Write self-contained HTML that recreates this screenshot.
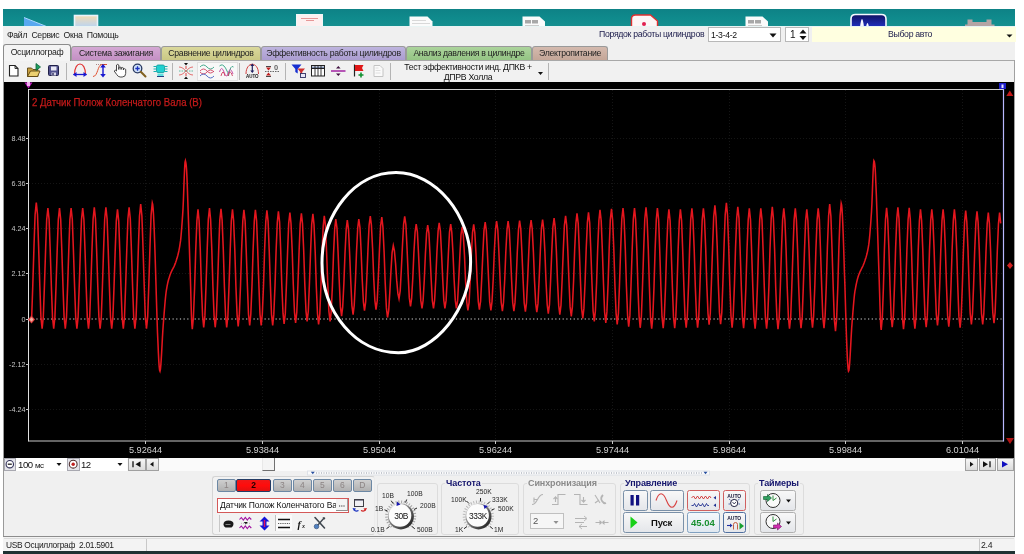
<!DOCTYPE html>
<html lang="ru">
<head>
<meta charset="utf-8">
<title>USB Осциллограф</title>
<style>
html,body{margin:0;padding:0;}
body{width:1024px;height:554px;position:relative;overflow:hidden;background:#ffffff;font-family:"Liberation Sans",sans-serif;font-size:11px;color:#1a1a1a;}
.a{position:absolute;}
.t{position:absolute;white-space:nowrap;line-height:1;will-change:transform;}
#desk{left:3px;top:9px;width:1012px;height:18px;background:#10888a;}
#win{left:3px;top:27px;width:1012px;height:524px;background:#f0f0f0;}
#dark{left:3px;top:551px;width:1012px;height:3px;background:#1f3232;}
.tab{will-change:transform;position:absolute;top:46px;height:14px;border:1px solid #9a9a9a;border-bottom:none;border-radius:3px 3px 0 0;box-sizing:border-box;text-align:center;font-size:8.700px;letter-spacing:-0.300px;line-height:13px;white-space:nowrap;color:#222;}
.u{font-size:8.700px;letter-spacing:-0.300px;}
.sep{position:absolute;width:1px;background:#b4b4b4;top:63px;height:17px;}
svg{position:absolute;overflow:visible;}
.btn{position:absolute;box-sizing:border-box;border:1px solid #7f8fa0;border-radius:2px;background:linear-gradient(#f6f6f6,#dcdcdc);}
.grp{position:absolute;box-sizing:border-box;border:1px solid #dcdcdc;border-radius:3px;}
.kl{will-change:transform;position:absolute;white-space:nowrap;line-height:1;font-size:6.700px;color:#262626;}
</style>
</head>
<body>
<div id="desk" class="a"></div>
<svg class="a" style="left:0;top:0;" width="1024" height="27" viewBox="0 0 1024 27">
  <defs>
    <linearGradient id="gteal" x1="0" y1="0" x2="0" y2="1"><stop offset="0" stop-color="#0e8286"/><stop offset="0.5" stop-color="#0f8a8c"/><stop offset="1" stop-color="#169090"/></linearGradient>
    <linearGradient id="gimg" x1="0" y1="0" x2="0" y2="1"><stop offset="0" stop-color="#f4dcb4"/><stop offset="1" stop-color="#b8d4f4"/></linearGradient>
    <linearGradient id="gnavy" x1="0" y1="0" x2="0" y2="1"><stop offset="0" stop-color="#101060"/><stop offset="1" stop-color="#2030c0"/></linearGradient>
  </defs>
  <rect x="3" y="9" width="1012" height="17.500" fill="url(#gteal)"/>
  <path d="M24 17.500L46.500 26.500H24z" fill="#58a8f0"/>
  <path d="M24 17.500L46.500 26.500" stroke="#a8d8ff" stroke-width="1" fill="none"/>
  <rect x="74.500" y="15.500" width="23" height="12" fill="url(#gimg)" stroke="#e8f4fc" stroke-width="1.600"/>
  <rect x="296.500" y="14.500" width="26" height="13" fill="#fdf0f0" stroke="#f0f8f8" stroke-width="1"/>
  <path d="M301 18.500h17M306 20.500h8" stroke="#e08080" stroke-width="0.800"/>
  <path d="M409.500 27V16.500h18l5 5V27z" fill="#fbfbfb"/>
  <path d="M412 20.500h14M412 23.500h18" stroke="#d0d0d0" stroke-width="0.800"/>
  <path d="M522.500 27V16.500h17l5.500 5V27z" fill="#fbfbfb"/>
  <path d="M525 20h6v3.500h-6zM532 20h6v3.500h-6z" fill="#a8a8a8"/>
  <path d="M525 25.500h14" stroke="#c0c0c0" stroke-width="0.800"/>
  <path d="M631.500 27V19q0-4 4-4h15l7 6V27z" fill="#fdf6f6" stroke="#e03030" stroke-width="1.400"/>
  <circle cx="644" cy="24" r="2" fill="#e02050"/>
  <path d="M745.500 27V16.500h17l5.500 5V27z" fill="#fbfbfb"/>
  <path d="M748 20h6v3.500h-6zM755 20h6v3.500h-6z" fill="#a8a8a8"/>
  <path d="M748 25.500h14" stroke="#c0c0c0" stroke-width="0.800"/>
  <path d="M851 27V19q0-4.500 4.500-4.500h26q4.500 0 4.500 4.500V27z" fill="url(#gnavy)" stroke="#f4f8ff" stroke-width="1.600"/>
  <path d="M860 27q1-8 2-8t2 8zM866 27q0.800-4 1.500-4t1.500 4z" fill="#f8f8ff"/>
  <path d="M965 27v-2.500h2.500V19.500h5V22h14V19.500h5V24.500h3V27z" fill="#b4a4a4"/>
</svg>

<div id="win" class="a"></div>
<div id="dark" class="a"></div>
<div class="a" style="left:3px;top:26px;width:1012px;height:1px;background:#e8f4f4;"></div>
<div class="t" id="menu" style="left:7px;top:31.400px;font-size:8.700px;letter-spacing:-0.300px;color:#222;word-spacing:0px;">Файл&nbsp; Сервис&nbsp; Окна&nbsp; Помощь</div>
<div class="t" id="order" style="left:599px;top:30.400px;font-size:8.700px;letter-spacing:-0.300px;color:#1a1a4a;">Порядок работы цилиндров</div>
<div class="a" style="left:708px;top:27px;width:73px;height:15px;background:#fff;border:1px solid #b8b8b8;box-sizing:border-box;"></div>
<div class="t" style="left:711px;top:30.800px;font-size:8.700px;letter-spacing:-0.300px;color:#111;">1-3-4-2</div>
<svg style="left:769px;top:33px;" width="8" height="5"><path d="M0.500 0.500h7l-3.500 4z" fill="#111"/></svg>
<div class="a" style="left:785px;top:27px;width:24px;height:15px;background:#fff;border:1px solid #b8b8b8;box-sizing:border-box;"></div>
<div class="t" style="left:790px;top:30.400px;font-size:10px;color:#111;">1</div>
<svg style="left:799px;top:29px;" width="8" height="12"><path d="M0.500 4.500h7l-3.500-4zM0.500 7h7l-3.500 4z" fill="#111"/></svg>
<div class="a" style="left:811.500px;top:27px;width:204px;height:15px;background:#ffffe0;"></div>
<div class="t" id="vybor" style="left:888px;top:30.400px;font-size:8.700px;letter-spacing:-0.300px;color:#1a1a4a;">Выбор авто</div>
<svg style="left:1006px;top:34px;" width="7" height="4"><path d="M0.500 0.500h6l-3 3z" fill="#111"/></svg>

<div class="a" style="left:3px;top:60px;width:1012px;height:1px;background:#a8a8a8;"></div>
<div class="tab" style="left:71px;width:90px;background:linear-gradient(#d4a8d4,#c490c4);">Система зажигания</div>
<div class="tab" style="left:161px;width:100px;background:linear-gradient(#dad89c,#cac884);">Сравнение цилиндров</div>
<div class="tab" style="left:261px;width:145px;background:linear-gradient(#beb4de,#aa9cd0);">Эффективность работы цилиндров</div>
<div class="tab" style="left:406px;width:126px;background:linear-gradient(#acd49c,#94c484);">Анализ давления в цилиндре</div>
<div class="tab" style="left:532px;width:76px;background:linear-gradient(#d4baae,#c4a698);">Электропитание</div>
<div class="tab" style="left:3px;top:44px;height:17px;width:68px;background:#f4f4f4;line-height:15px;border-color:#8c8c8c;">Осциллограф</div>

<div class="a" style="left:4px;top:61px;width:1010px;height:21px;background:#f1f1f1;"></div>
<div class="a" style="left:197px;top:62px;width:41px;height:19px;background:#f8f8f8;border:1px solid #e0e0e0;box-sizing:border-box;"></div>
<div class="sep" style="left:66px;"></div>
<div class="sep" style="left:172px;"></div>
<div class="sep" style="left:239px;"></div>
<div class="sep" style="left:285px;"></div>
<div class="sep" style="left:390px;"></div>
<div class="sep" style="left:548px;"></div>
<svg style="left:0;top:0;" width="560" height="84" viewBox="0 0 560 84">
  <!-- new -->
  <path d="M9.500 65.500h5.500l3 3v7.500h-8.500z" fill="#fff" stroke="#222" stroke-width="1.100"/>
  <path d="M15 65.500v3h3" fill="none" stroke="#222" stroke-width="0.900"/>
  <!-- open -->
  <path d="M27.500 76.500v-8.500h4l1.500 1.500h5v7z" fill="#c8a040" stroke="#5c4410" stroke-width="0.900"/>
  <path d="M27.500 76.500l3-5.500h9.500l-2.500 5.500z" fill="#ecd070" stroke="#5c4410" stroke-width="0.900"/>
  <path d="M36 63.500l4.500 3.500-4.500 3.500z" fill="#20a060" stroke="#0c6038" stroke-width="0.800"/>
  <!-- save -->
  <rect x="48.500" y="65.500" width="10" height="10" rx="1" fill="#50508c" stroke="#202048" stroke-width="1"/>
  <rect x="51" y="66.500" width="5.500" height="4" fill="#e8e8f4"/>
  <rect x="51.500" y="72.500" width="4.500" height="3" fill="#d8d8e8"/>
  <rect x="52.300" y="73" width="1.400" height="2.300" fill="#303060"/>
  <!-- arc with arrow -->
  <path d="M74.500 74.500c0-14 11-14 11 0" fill="none" stroke="#e03030" stroke-width="1.100"/>
  <path d="M73.500 74.500h13" stroke="#1818d0" stroke-width="1.300"/>
  <path d="M73 74.500l3.500-2.500v5zM87 74.500l-3.500-2.500v5z" fill="#1818d0"/>
  <!-- s-curve with arrow -->
  <path d="M93 76.500c5 0 4.500-12 9-12h5" fill="none" stroke="#e05030" stroke-width="1"/>
  <path d="M96 64.500h10" stroke="#804040" stroke-width="0.600" stroke-dasharray="1 1"/>
  <path d="M103 66v9" stroke="#1818d0" stroke-width="1.400"/>
  <path d="M103 64l-2.800 3.500h5.600zM103 77.500l-2.800-3.500h5.600z" fill="#1818d0"/>
  <!-- hand -->
  <path d="M116.500 70.500v-5.500q1.200-1.300 2.300 0v4.500v-2q1.200-1 2.300 0v2v-1.500q1.200-1 2.300 0v2v-1q1.300-0.800 2.300 0.400v4q0 3.600-3.500 3.600h-2q-2 0-3.500-2.500l-2.500-3.500q0.800-1.600 2.800 0z" fill="#fff" stroke="#333" stroke-width="0.900" stroke-linejoin="round"/>
  <!-- magnifier -->
  <circle cx="137.500" cy="68.500" r="4.300" fill="#cfe0f8" stroke="#283860" stroke-width="1.300"/>
  <path d="M135.300 68.500h4.400M137.500 66.300v4.400" stroke="#1830c0" stroke-width="1.300"/>
  <path d="M140.800 71.800l4.700 4.700" stroke="#806020" stroke-width="2" stroke-linecap="round"/>
  <!-- chip -->
  <rect x="156.500" y="65" width="8" height="7.500" rx="1.500" fill="#20d0d0" stroke="#109898" stroke-width="0.800"/>
  <path d="M153.500 66.500h3M153.500 69h3M153.500 71.500h3M164.500 66.500h3M164.500 69h3M164.500 71.500h3" stroke="#18b0b0" stroke-width="1"/>
  <path d="M157.500 73.500h6v3h-6z" fill="#60e0e0"/>
  <path d="M157 76.500h7" stroke="#204080" stroke-width="1"/>
  <!-- cross curves -->
  <path d="M179 67c6 0 8 8 14 8M179 75c6 0 8-8 14-8" fill="none" stroke="#e06060" stroke-width="0.900"/>
  <path d="M179 71h14" stroke="#40b090" stroke-width="0.800" stroke-dasharray="1.500 1"/>
  <path d="M186 65.500l-2-2.500h4zM186 76.500l-2 2.500h4z" fill="#111"/>
  <path d="M186 66v3M186 73v3" stroke="#e03030" stroke-width="0.900"/>
  <!-- multi waves -->
  <path d="M200 67q3.500-4 7 0t7 0" fill="none" stroke="#30a080" stroke-width="0.900"/>
  <path d="M200 71q3.500-4 7 0t7 0" fill="none" stroke="#d04060" stroke-width="0.900"/>
  <path d="M200 72q3.500 4 7 0t7 0" fill="none" stroke="#d04060" stroke-width="0.900"/>
  <path d="M200 76q3.500-4 7 0t7 0" fill="none" stroke="#4060c0" stroke-width="0.900"/>
  <!-- overlapped -->
  <path d="M219.500 66q3 -3 6 2t3 8q2-12 5-9" fill="none" stroke="#30a080" stroke-width="0.900"/>
  <path d="M219.500 72q2-7 4.500 0t4 2q2-9 5 0" fill="none" stroke="#c040a0" stroke-width="0.900"/>
  <path d="M221 76q2-8 4 0M228 76q2-8 4.500 0" fill="none" stroke="#d04060" stroke-width="0.900"/>
  <!-- auto -->
  <path d="M246 74c0-13 12.500-13 12.500 0" fill="none" stroke="#d04040" stroke-width="1"/>
  <path d="M252.300 65v7" stroke="#202060" stroke-width="1.200"/>
  <path d="M252.300 63.500l-2 2.500h4zM252.300 73l-2-2.500h4z" fill="#202060"/>
  <text x="252.300" y="77.500" font-size="4.500" font-weight="bold" text-anchor="middle" fill="#111" font-family="Liberation Sans, sans-serif">AUTO</text>
  <!-- +-0 -->
  <path d="M265 71.500h14" stroke="#444" stroke-width="0.800" stroke-dasharray="1.500 1"/>
  <path d="M268.500 70.500l-2.500-3h5zM268.500 72.500l-2.500 3h5z" fill="#c02020"/>
  <path d="M266 66.500h5M266 76.500h5" stroke="#333" stroke-width="0.900"/>
  <text x="276" y="70" font-size="7.500" font-weight="bold" text-anchor="middle" fill="#666" font-family="Liberation Sans, sans-serif">0</text>
  <!-- filter -->
  <path d="M291.500 64.500h10l-3.800 4.500v4.500l-2.400-1.500v-3z" fill="#1830d0"/>
  <path d="M297.500 68.500h7.500l-2.800 3.500v4l-1.900-1.200v-2.800z" fill="#d03030"/>
  <rect x="300.500" y="73.500" width="5" height="4" fill="#e8e8f8" stroke="#303060" stroke-width="0.900"/>
  <!-- table -->
  <rect x="311.500" y="65.500" width="13" height="10.500" fill="#fff" stroke="#222" stroke-width="1"/>
  <path d="M311.500 68.500h13" stroke="#222" stroke-width="1"/>
  <path d="M312 66.500h12v1.500h-12z" fill="#8090b0"/>
  <path d="M315 65.500v10.500M318 65.500v10.500M321 65.500v10.500" stroke="#222" stroke-width="0.900"/>
  <!-- divider -->
  <path d="M331 71h14.500" stroke="#a020a0" stroke-width="1.500"/>
  <path d="M338.300 66l-2.300 2.500h4.600zM338.300 76l-2.300-2.500h4.600z" fill="#401040"/>
  <!-- flag -->
  <path d="M354.500 64.500v12" stroke="#222" stroke-width="1.200"/>
  <path d="M355 65h8.500l-1.500 3 1.500 3h-8.500z" fill="#e01818"/>
  <path d="M358.500 75h5M361 72.500v5" stroke="#109030" stroke-width="1.600"/>
  <!-- doc disabled -->
  <path d="M374 65.500h6l3 3v8h-9z" fill="#fafafa" stroke="#c4c4c4" stroke-width="1"/>
  <path d="M375.500 68h3M375.500 70.500h5M375.500 73h5" stroke="#d8d8d8" stroke-width="0.800"/>
  <!-- dropdown arrow -->
  <path d="M538 72h5l-2.500 3z" fill="#111"/>
</svg>
<div class="t u" id="test1" style="left:398px;width:140px;text-align:center;top:62.500px;color:#111;">Тест эффективности инд. ДПКВ +</div>
<div class="t u" id="test2" style="left:398px;width:140px;text-align:center;top:72.500px;color:#111;">ДПРВ Холла</div>

<div class="a" style="left:4px;top:82px;width:1011px;height:376px;background:#000;"></div>
<svg class="a" style="left:0;top:0;" width="1024" height="554" viewBox="0 0 1024 554">
  <g stroke="#151515" stroke-width="1" stroke-dasharray="1 2" fill="none">
    <path d="M29 138.5H1003M29 183.5H1003M29 228.5H1003M29 273.5H1003M29 364.5H1003M29 409.5H1003"/>
    <path d="M145.5 90V441M262.5 90V441M379.5 90V441M495.5 90V441M612.5 90V441M729.5 90V441M845.5 90V441M962.5 90V441"/>
  </g>
  <path d="M29 319H1001.500" stroke="#d8d8d8" stroke-width="1.100" stroke-dasharray="1.200 2.480" fill="none"/>
  <path d="M31.7 316.6 L32.8 285.0 L34.0 246.1 L35.1 214.5 L36.3 202.5 L37.5 214.5 L38.6 246.1 L39.8 285.0 L40.9 316.6 L42.1 328.6 L43.3 317.1 L44.4 286.9 L45.6 249.7 L46.7 219.5 L47.9 208.0 L49.1 219.5 L50.2 249.7 L51.4 286.9 L52.5 317.1 L53.7 328.6 L54.9 317.1 L56.0 286.9 L57.2 249.7 L58.3 219.5 L59.5 208.0 L60.7 219.5 L61.8 249.7 L63.0 286.9 L64.1 317.1 L65.3 328.6 L66.5 317.1 L67.6 286.9 L68.8 249.7 L69.9 219.5 L71.1 208.0 L72.3 219.5 L73.4 249.7 L74.6 286.9 L75.7 317.1 L76.9 328.6 L78.1 317.1 L79.2 286.9 L80.4 249.7 L81.5 219.5 L82.7 208.0 L83.9 219.5 L85.0 249.7 L86.2 286.9 L87.3 317.1 L88.5 328.6 L89.7 317.0 L90.8 286.7 L92.0 249.3 L93.1 219.0 L94.3 207.4 L95.5 219.0 L96.6 249.3 L97.8 286.7 L98.9 317.0 L100.1 328.6 L101.3 317.0 L102.4 286.7 L103.6 249.3 L104.7 219.0 L105.9 207.4 L107.1 219.0 L108.2 249.3 L109.4 286.7 L110.5 317.0 L111.7 328.6 L112.9 317.2 L114.0 287.4 L115.2 250.6 L116.3 220.8 L117.5 209.4 L118.7 220.8 L119.8 250.6 L121.0 287.4 L122.1 317.2 L123.3 328.6 L124.5 317.0 L125.6 286.7 L126.8 249.3 L127.9 219.0 L129.1 207.4 L130.3 219.0 L131.4 249.3 L132.6 286.7 L133.7 317.0 L134.9 328.6 L136.1 316.7 L137.2 285.6 L138.4 247.1 L139.5 216.0 L140.7 204.1 L141.9 216.0 L143.0 247.1 L144.2 285.6 L145.3 316.7 L146.5 328.6 L147.7 316.6 L148.8 285.2 L150.0 246.3 L151.1 214.9 L152.3 202.9 L152.7 204.3 L153.1 208.2 L153.5 214.4 L153.9 222.5 L154.3 232.2 L154.7 243.3 L155.1 255.4 L155.5 268.2 L155.9 281.5 L156.3 294.9 L156.7 308.1 L157.1 320.8 L157.5 332.8 L158.0 343.7 L158.4 353.1 L158.8 360.9 L159.2 366.7 L159.6 370.2 L160.0 371.2 L160.4 369.4 L160.8 365.5 L161.2 359.9 L161.6 353.1 L162.0 345.7 L162.4 338.3 L162.8 331.3 L163.2 325.3 L163.6 320.3 L164.0 315.2 L164.4 310.1 L164.8 305.2 L165.2 300.6 L165.6 296.5 L166.0 293.0 L166.4 290.2 L166.8 287.8 L167.2 285.6 L167.6 283.6 L168.0 281.8 L168.4 280.2 L168.8 278.7 L169.3 277.3 L169.7 276.0 L170.1 274.8 L170.5 273.8 L170.9 272.8 L171.3 271.9 L171.7 271.0 L172.1 270.2 L172.5 269.4 L172.9 268.7 L173.3 267.9 L173.7 267.1 L174.1 266.3 L174.5 265.4 L174.9 264.4 L175.3 263.4 L175.7 262.3 L176.1 261.1 L176.5 259.8 L176.9 258.6 L177.3 257.2 L177.7 255.8 L178.1 254.2 L178.5 252.5 L178.9 250.7 L179.3 248.6 L179.7 246.3 L180.1 243.7 L180.6 240.4 L181.0 236.3 L181.4 231.7 L181.8 226.7 L182.2 221.2 L182.6 215.4 L183.0 209.0 L183.4 200.0 L183.8 189.1 L184.2 178.1 L184.6 168.6 L185.0 162.3 L185.4 160.7 L185.8 162.3 L186.2 165.2 L186.6 169.9 L187.0 178.4 L187.4 189.3 L187.8 201.2 L188.2 212.6 L188.6 223.9 L189.0 235.9 L189.4 248.3 L189.8 260.7 L190.2 272.7 L190.6 285.7 L191.0 300.5 L191.4 314.6 L191.9 325.1 L192.3 329.2 L193.4 317.8 L194.6 287.8 L195.7 250.8 L196.9 220.8 L198.0 209.4 L199.1 220.7 L200.3 250.1 L201.4 286.6 L202.6 316.0 L203.7 327.3 L204.9 315.9 L206.0 286.1 L207.2 249.2 L208.3 219.4 L209.5 208.0 L210.6 219.4 L211.8 249.2 L212.9 286.1 L214.1 315.9 L215.2 327.3 L216.4 316.0 L217.5 286.4 L218.7 249.7 L219.8 220.1 L221.0 208.8 L222.1 220.1 L223.3 249.7 L224.4 286.4 L225.6 316.0 L226.7 327.3 L227.9 316.0 L229.0 286.6 L230.2 250.1 L231.3 220.7 L232.5 209.4 L233.6 220.6 L234.8 249.8 L235.9 285.9 L237.1 315.1 L238.2 326.3 L239.3 315.2 L240.5 286.1 L241.6 250.1 L242.8 221.0 L243.9 209.9 L245.1 220.9 L246.2 249.8 L247.4 285.4 L248.5 314.3 L249.7 325.3 L250.8 314.3 L252.0 285.4 L253.1 249.8 L254.3 220.9 L255.4 209.9 L256.6 220.9 L257.7 249.8 L258.9 285.4 L260.0 314.3 L261.2 325.3 L262.3 314.3 L263.5 285.6 L264.6 250.0 L265.8 221.3 L266.9 210.3 L268.1 221.3 L269.2 250.0 L270.4 285.6 L271.5 314.3 L272.7 325.3 L273.8 314.4 L275.0 285.9 L276.1 250.7 L277.3 222.2 L278.4 211.3 L279.6 222.1 L280.7 250.2 L281.8 285.1 L283.0 313.2 L284.1 324.0 L285.3 313.4 L286.4 285.5 L287.6 251.2 L288.7 223.3 L289.9 212.7 L291.0 223.2 L292.2 250.7 L293.3 284.8 L294.5 312.3 L295.6 322.8 L296.8 312.3 L297.9 285.0 L299.1 251.1 L300.2 223.8 L301.4 213.3 L302.5 223.6 L303.7 250.6 L304.8 284.1 L306.0 311.1 L307.1 321.4 L308.3 311.1 L309.4 284.2 L310.6 251.0 L311.7 224.1 L312.9 213.8 L314.0 224.4 L315.2 252.0 L316.3 286.2 L317.5 313.8 L318.6 324.4 L319.8 314.0 L320.9 286.9 L322.0 253.3 L323.2 226.2 L324.3 215.8 L325.5 225.9 L326.6 252.3 L327.8 284.9 L328.9 311.3 L330.1 321.4 L331.2 311.6 L332.4 286.1 L333.5 254.4 L334.7 228.9 L335.8 219.1 L337.0 228.4 L338.1 252.6 L339.3 282.7 L340.4 306.9 L341.6 316.2 L342.7 307.0 L343.9 283.0 L345.0 253.3 L346.2 229.3 L347.3 220.1 L348.5 229.1 L349.6 252.7 L350.8 282.0 L351.9 305.6 L353.1 314.6 L354.2 305.5 L355.4 281.6 L356.5 252.1 L357.7 228.2 L358.8 219.1 L360.0 227.8 L361.1 250.7 L362.2 279.1 L363.4 302.0 L364.5 310.7 L365.7 301.7 L366.8 278.1 L368.0 248.8 L369.1 225.2 L370.3 216.2 L371.4 225.1 L372.6 248.5 L373.7 277.4 L374.9 300.8 L376.0 309.7 L377.2 300.9 L378.3 277.7 L379.5 249.2 L380.6 226.0 L381.8 217.2 L382.9 226.8 L384.1 251.9 L385.2 282.8 L386.4 307.9 L387.5 317.5 L388.7 310.6 L389.8 292.7 L391.0 270.4 L392.1 252.5 L393.3 245.6 L394.4 250.7 L395.6 263.9 L396.7 280.4 L397.9 293.6 L399.0 298.7 L400.2 290.8 L401.3 270.2 L402.5 244.8 L403.6 224.2 L404.7 216.3 L405.9 224.9 L407.0 247.5 L408.2 275.3 L409.3 297.9 L410.5 306.5 L411.6 298.6 L412.8 278.0 L413.9 252.6 L415.1 232.0 L416.2 224.1 L417.4 232.2 L418.5 253.3 L419.7 279.3 L420.8 300.4 L422.0 308.5 L423.1 300.5 L424.3 279.7 L425.4 253.9 L426.6 233.1 L427.7 225.1 L428.9 233.1 L430.0 253.9 L431.2 279.7 L432.3 300.5 L433.5 308.5 L434.6 300.3 L435.8 278.9 L436.9 252.4 L438.1 231.0 L439.2 222.8 L440.4 231.0 L441.5 252.4 L442.7 278.9 L443.8 300.3 L444.9 308.5 L446.1 300.4 L447.2 279.3 L448.4 253.3 L449.5 232.2 L450.7 224.1 L451.8 232.2 L453.0 253.3 L454.1 279.3 L455.3 300.4 L456.4 308.5 L457.6 300.7 L458.7 280.3 L459.9 255.0 L461.0 234.6 L462.2 226.8 L463.3 234.8 L464.5 255.7 L465.6 281.6 L466.8 302.5 L467.9 310.5 L469.1 302.3 L470.2 280.8 L471.4 254.1 L472.5 232.6 L473.7 224.4 L474.8 232.5 L476.0 253.9 L477.1 280.2 L478.3 301.6 L479.4 309.7 L480.6 301.3 L481.7 279.4 L482.9 252.3 L484.0 230.4 L485.2 222.0 L486.3 230.4 L487.4 252.5 L488.6 279.8 L489.7 301.9 L490.9 310.3 L492.0 301.8 L493.2 279.5 L494.3 251.9 L495.5 229.6 L496.6 221.1 L497.8 229.7 L498.9 252.2 L500.1 280.0 L501.2 302.5 L502.4 311.1 L503.5 302.5 L504.7 280.0 L505.8 252.2 L507.0 229.7 L508.1 221.1 L509.3 229.7 L510.4 252.2 L511.6 280.0 L512.7 302.5 L513.9 311.1 L515.0 302.4 L516.2 279.8 L517.3 251.8 L518.5 229.2 L519.6 220.5 L520.8 229.2 L521.9 252.0 L523.1 280.2 L524.2 303.0 L525.4 311.7 L526.5 303.0 L527.6 280.1 L528.8 251.7 L529.9 228.8 L531.1 220.1 L532.2 228.9 L533.4 251.9 L534.5 280.4 L535.7 303.4 L536.8 312.2 L538.0 303.4 L539.1 280.2 L540.3 251.7 L541.4 228.5 L542.6 219.7 L543.7 228.7 L544.9 252.1 L546.0 281.2 L547.2 304.6 L548.3 313.6 L549.5 304.5 L550.6 280.6 L551.8 251.1 L552.9 227.2 L554.1 218.1 L555.2 227.3 L556.4 251.4 L557.5 281.3 L558.7 305.4 L559.8 314.6 L561.0 305.2 L562.1 280.5 L563.3 249.9 L564.4 225.2 L565.6 215.8 L566.7 225.4 L567.8 250.6 L569.0 281.7 L570.1 306.9 L571.3 316.5 L572.4 306.6 L573.6 280.8 L574.7 249.0 L575.9 223.2 L577.0 213.3 L578.2 223.3 L579.3 249.6 L580.5 282.2 L581.6 308.5 L582.8 318.5 L583.9 308.4 L585.1 281.8 L586.2 249.0 L587.4 222.4 L588.5 212.3 L589.7 222.7 L590.8 250.0 L592.0 283.7 L593.1 311.0 L594.3 321.4 L595.4 310.8 L596.6 282.9 L597.7 248.4 L598.9 220.5 L600.0 209.9 L601.2 220.7 L602.3 248.9 L603.5 283.8 L604.6 312.0 L605.8 322.8 L606.9 311.9 L608.1 283.4 L609.2 248.2 L610.3 219.7 L611.5 208.8 L612.6 219.8 L613.8 248.7 L614.9 284.5 L616.1 313.4 L617.2 324.4 L618.4 313.3 L619.5 284.2 L620.7 248.2 L621.8 219.1 L623.0 208.0 L624.1 219.3 L625.3 249.0 L626.4 285.7 L627.6 315.4 L628.7 326.7 L629.9 315.4 L631.0 285.7 L632.2 249.0 L633.3 219.3 L634.5 208.0 L635.6 219.4 L636.8 249.4 L637.9 286.4 L639.1 316.4 L640.2 327.8 L641.4 316.3 L642.5 286.2 L643.7 249.0 L644.8 218.9 L646.0 207.4 L647.1 219.0 L648.3 249.3 L649.4 286.8 L650.5 317.1 L651.7 328.7 L652.8 317.2 L654.0 287.0 L655.1 249.7 L656.3 219.5 L657.4 208.0 L658.6 219.5 L659.7 249.5 L660.9 286.7 L662.0 316.7 L663.2 328.2 L664.3 316.9 L665.5 287.2 L666.6 250.4 L667.8 220.7 L668.9 209.4 L670.1 220.7 L671.2 250.4 L672.4 287.2 L673.5 316.9 L674.7 328.2 L675.8 316.9 L677.0 287.2 L678.1 250.4 L679.3 220.7 L680.4 209.4 L681.6 220.7 L682.7 250.3 L683.9 286.8 L685.0 316.4 L686.2 327.7 L687.3 316.3 L688.5 286.5 L689.6 249.6 L690.7 219.8 L691.9 208.4 L693.0 219.8 L694.2 249.6 L695.3 286.5 L696.5 316.3 L697.6 327.7 L698.8 316.3 L699.9 286.5 L701.1 249.6 L702.2 219.8 L703.4 208.4 L704.5 219.5 L705.7 248.6 L706.8 284.5 L708.0 313.6 L709.1 324.7 L710.3 313.3 L711.4 283.5 L712.6 246.6 L713.7 216.8 L714.9 205.4 L716.0 216.7 L717.2 246.4 L718.3 283.2 L719.5 312.9 L720.6 324.2 L721.8 312.6 L722.9 282.3 L724.1 244.8 L725.2 214.5 L726.4 202.9 L727.5 214.8 L728.7 246.0 L729.8 284.6 L731.0 315.8 L732.1 327.7 L733.2 316.2 L734.4 285.9 L735.5 248.6 L736.7 218.3 L737.8 206.8 L739.0 218.4 L740.1 248.7 L741.3 286.3 L742.4 316.6 L743.6 328.2 L744.7 316.8 L745.9 286.8 L747.0 249.8 L748.2 219.8 L749.3 208.4 L750.5 219.9 L751.6 250.0 L752.8 287.1 L753.9 317.2 L755.1 328.7 L756.2 317.2 L757.4 287.1 L758.5 250.0 L759.7 219.9 L760.8 208.4 L762.0 219.9 L763.1 250.0 L764.3 287.1 L765.4 317.2 L766.6 328.7 L767.7 317.1 L768.9 286.6 L770.0 248.9 L771.2 218.4 L772.3 206.8 L773.4 218.5 L774.6 249.1 L775.7 286.9 L776.9 317.5 L778.0 329.2 L779.2 317.7 L780.3 287.5 L781.5 250.1 L782.6 219.9 L783.8 208.4 L784.9 219.9 L786.1 250.0 L787.2 287.1 L788.4 317.2 L789.5 328.7 L790.7 317.2 L791.8 287.1 L793.0 250.0 L794.1 219.9 L795.3 208.4 L796.4 219.8 L797.6 249.8 L798.7 286.8 L799.9 316.8 L801.0 328.2 L802.2 316.9 L803.3 287.2 L804.5 250.4 L805.6 220.7 L806.8 209.4 L807.9 220.7 L809.1 250.3 L810.2 286.8 L811.4 316.4 L812.5 327.7 L813.6 316.3 L814.8 286.5 L815.9 249.6 L817.1 219.8 L818.2 208.4 L819.4 219.8 L820.5 249.8 L821.7 286.8 L822.8 316.8 L824.0 328.2 L825.1 316.3 L826.3 285.3 L827.4 247.0 L828.6 216.0 L829.7 204.1 L830.9 216.2 L832.0 248.0 L833.2 287.3 L834.3 319.1 L835.5 331.2 L836.6 319.0 L837.8 287.1 L838.9 247.6 L840.1 215.7 L841.2 203.5 L841.6 205.0 L842.0 209.1 L842.4 215.6 L842.8 224.1 L843.2 234.3 L843.6 245.8 L844.0 258.4 L844.4 271.7 L844.9 285.4 L845.3 299.1 L845.7 312.6 L846.1 325.4 L846.5 337.3 L846.9 347.9 L847.3 356.9 L847.7 364.0 L848.1 368.8 L848.5 371.1 L848.9 370.5 L849.3 367.5 L849.7 362.6 L850.1 356.3 L850.5 349.1 L850.9 341.6 L851.3 334.4 L851.7 327.8 L852.1 322.5 L852.5 317.4 L852.9 312.3 L853.3 307.3 L853.7 302.6 L854.1 298.2 L854.5 294.4 L854.9 291.3 L855.4 288.8 L855.8 286.5 L856.2 284.5 L856.6 282.6 L857.0 280.9 L857.4 279.3 L857.8 277.9 L858.2 276.6 L858.6 275.3 L859.0 274.2 L859.4 273.2 L859.8 272.3 L860.2 271.4 L860.6 270.6 L861.0 269.8 L861.4 269.0 L861.8 268.2 L862.2 267.4 L862.6 266.6 L863.0 265.8 L863.4 264.8 L863.8 263.8 L864.2 262.8 L864.6 261.6 L865.0 260.4 L865.4 259.1 L865.9 257.8 L866.3 256.4 L866.7 254.9 L867.1 253.3 L867.5 251.5 L867.9 249.5 L868.3 247.3 L868.7 244.9 L869.1 241.9 L869.5 238.1 L869.9 233.7 L870.3 228.8 L870.7 223.5 L871.1 217.8 L871.5 211.9 L871.9 204.0 L872.3 193.7 L872.7 182.5 L873.1 172.2 L873.5 164.4 L873.9 160.7 L874.3 161.4 L874.7 163.9 L875.1 167.5 L875.5 174.5 L875.9 184.6 L876.4 196.3 L876.8 208.1 L877.2 219.2 L877.6 231.2 L878.0 243.7 L878.4 256.2 L878.8 268.2 L879.2 279.7 L879.6 292.8 L880.0 306.2 L880.4 318.1 L880.8 326.6 L881.2 329.9 L882.3 318.3 L883.4 287.8 L884.4 250.0 L885.5 219.5 L886.6 207.9 L887.7 219.3 L888.9 249.1 L890.0 285.9 L891.1 315.7 L892.2 327.1 L893.4 315.7 L894.5 285.7 L895.6 248.6 L896.8 218.6 L897.9 207.2 L899.0 218.8 L900.2 249.3 L901.3 287.0 L902.4 317.5 L903.5 329.1 L904.7 317.5 L905.8 287.2 L906.9 249.8 L908.1 219.5 L909.2 207.9 L910.3 219.4 L911.5 249.6 L912.6 287.0 L913.7 317.2 L914.9 328.7 L916.0 317.3 L917.1 287.4 L918.2 250.6 L919.4 220.7 L920.5 209.3 L921.6 220.5 L922.8 250.0 L923.9 286.4 L925.0 315.9 L926.2 327.1 L927.3 315.9 L928.4 286.4 L929.5 250.0 L930.7 220.5 L931.8 209.3 L932.9 220.4 L934.1 249.4 L935.2 285.3 L936.3 314.3 L937.5 325.4 L938.6 314.3 L939.7 285.3 L940.8 249.4 L942.0 220.4 L943.1 209.3 L944.2 220.5 L945.4 249.8 L946.5 286.1 L947.6 315.4 L948.8 326.6 L949.9 315.4 L951.0 286.1 L952.1 249.8 L953.3 220.5 L954.4 209.3 L955.5 220.6 L956.7 250.2 L957.8 286.8 L958.9 316.4 L960.1 327.7 L961.2 316.5 L962.3 287.2 L963.4 251.1 L964.6 221.8 L965.7 210.6 L966.8 221.5 L968.0 249.9 L969.1 285.1 L970.2 313.5 L971.4 324.4 L972.5 313.6 L973.6 285.3 L974.7 250.4 L975.9 222.1 L977.0 211.3 L978.1 222.1 L979.3 250.4 L980.4 285.3 L981.5 313.6 L982.7 324.4 L983.8 313.7 L984.9 285.8 L986.0 251.3 L987.2 223.4 L988.3 212.7 L989.4 223.3 L990.6 250.9 L991.7 285.0 L992.8 312.6 L994.0 323.2 L995.1 312.6 L996.2 285.0 L997.3 250.9 L998.5 223.3 L999.6 212.7 L1000.7 223.3" fill="none" stroke="#e4161e" stroke-width="1.550" stroke-linejoin="miter" stroke-miterlimit="6"/>
  <path d="M322.0 263.0C322.0 213.0 355.1 172.5 396.0 172.5C435.5 172.5 470.6 214.6 470.6 262.0C470.6 308.3 435.2 352.8 398.3 352.8C356.2 352.8 322.0 312.6 322.0 263.0Z" fill="none" stroke="#ffffff" stroke-width="3"/>
  <path d="M28.5 89.5H1003.5" stroke="#d0d0d0" stroke-width="1" fill="none"/>
  <path d="M28.5 89V441.5" stroke="#e0e0e0" stroke-width="1" fill="none"/>
  <path d="M28.5 441H1003.5" stroke="#c8c8c8" stroke-width="1" fill="none"/>
  <path d="M1003.5 89V441.5" stroke="#b8b8ff" stroke-width="1.2" fill="none"/>
  <g stroke="#c8c8c8" stroke-width="1">
    <path d="M26 138.5h3M26 183.5h3M26 228.5h3M26 273.5h3M26 319.5h3M26 364.5h3M26 409.5h3"/>
    <path d="M145.5 441v3M262.5 441v3M379.5 441v3M495.5 441v3M612.5 441v3M729.5 441v3M845.5 441v3M962.5 441v3"/>
  </g>
  <!-- markers -->
  <path d="M24.5 82.5h8l-4 6z" fill="#c020c0"/>
  <rect x="27" y="82" width="3" height="4" fill="#f0b0f0"/>
  <rect x="999" y="83" width="7" height="6" fill="#1c1cc8"/>
  <rect x="1001.5" y="84.500" width="2" height="3.500" fill="#e0e0ff"/>
  <path d="M1006.300 96h7l-3.500-5.500z" fill="#c41818"/>
  <path d="M1006 438h8l-4 6z" fill="#b01414"/>
  <path d="M1007 265.500l3-3.500 3 3.500-3 3.500z" fill="#d02020"/>
  <path d="M28 319.500l3.500-4 3.500 4-3.500 4z" fill="#e04040"/>
  <path d="M29.500 319.500l2-2.200 2 2.200-2 2.200z" fill="#f0b0a0"/>
  <g font-family="Liberation Sans, sans-serif" font-size="7.200" fill="#c4c4c4" text-anchor="end">
    <text x="25.500" y="141">8.48</text>
    <text x="25.500" y="186">6.36</text>
    <text x="25.500" y="231">4.24</text>
    <text x="25.500" y="276">2.12</text>
    <text x="25.500" y="322">0</text>
    <text x="25.500" y="367">-2.12</text>
    <text x="25.500" y="412">-4.24</text>
  </g>
  <g font-family="Liberation Sans, sans-serif" font-size="9.200" fill="#d2d2d2" text-anchor="middle">
    <text x="145.500" y="453">5.92644</text>
    <text x="262.500" y="453">5.93844</text>
    <text x="379.500" y="453">5.95044</text>
    <text x="495.500" y="453">5.96244</text>
    <text x="612.500" y="453">5.97444</text>
    <text x="729.500" y="453">5.98644</text>
    <text x="845.500" y="453">5.99844</text>
    <text x="962.500" y="453">6.01044</text>
  </g>
  <text x="32" y="106" font-family="Liberation Sans, sans-serif" font-size="10.300" fill="#c41a1a" stroke="#c41a1a" stroke-width="0.250" textLength="170" lengthAdjust="spacingAndGlyphs">2 Датчик Полож Коленчатого Вала (В)</text>
</svg>

<div class="a" style="left:4px;top:458px;width:1010px;height:12.500px;background:#fafafa;"></div>
<div class="a" style="left:4px;top:458px;width:12px;height:12.500px;background:#e4e4ea;border:1px solid #a8a8b0;box-sizing:border-box;"></div>
<div class="a" style="left:67px;top:458px;width:12.500px;height:12.500px;background:#e4e4ea;border:1px solid #a8a8b0;box-sizing:border-box;"></div>
<div class="a" style="left:16px;top:458px;width:51px;height:12.500px;background:#fff;"></div>
<div class="a" style="left:80px;top:458px;width:47px;height:12.500px;background:#fff;"></div>
<div class="t" style="left:17.800px;top:459.800px;font-size:9.600px;letter-spacing:-0.450px;color:#111;">100 <span style="font-size:8px">мс</span></div>
<div class="t" style="left:80.800px;top:459.800px;font-size:9.600px;letter-spacing:-0.600px;color:#111;">12</div>
<div class="btn" style="left:127.500px;top:458px;width:18px;height:12.500px;border-color:#a0a0a0;border-radius:0;"></div>
<div class="btn" style="left:146px;top:458px;width:12.500px;height:12.500px;border-color:#a0a0a0;border-radius:0;"></div>
<div class="btn" style="left:965px;top:458px;width:12.500px;height:12.500px;border-color:#a0a0a0;border-radius:0;"></div>
<div class="btn" style="left:978.500px;top:458px;width:17.500px;height:12.500px;border-color:#a0a0a0;border-radius:0;"></div>
<div class="btn" style="left:996.500px;top:458px;width:17px;height:12.500px;border-color:#a0a0a0;border-radius:0;"></div>
<div class="a" style="left:262px;top:458px;width:13px;height:12.500px;background:#f4f4f4;border-right:1.500px solid #707070;border-bottom:1.500px solid #707070;border-left:1px solid #e8e8e8;box-sizing:border-box;"></div>
<svg style="left:0;top:452px;" width="1024" height="26" viewBox="0 452 1024 26">
  <circle cx="9.800" cy="464.200" r="3.700" fill="#fff" stroke="#303058" stroke-width="1.100"/>
  <path d="M7.800 464.200h4" stroke="#222" stroke-width="1.300"/>
  <circle cx="73.200" cy="464.200" r="3.900" fill="#fff" stroke="#503030" stroke-width="1.100"/>
  <circle cx="73.200" cy="464.200" r="1.700" fill="#c02020"/>
  <path d="M56.500 463h5l-2.500 3z" fill="#111"/>
  <path d="M117.500 463h5l-2.500 3z" fill="#111"/>
  <path d="M133 461.200v6" stroke="#111" stroke-width="1.300"/>
  <path d="M140.500 461.200v6l-5-3z" fill="#111"/>
  <path d="M153.500 461.700v5l-3.500-2.500z" fill="#111"/>
  <path d="M970 461.700v5l3.500-2.500z" fill="#111"/>
  <path d="M983 461.200v6l5-3z" fill="#111"/>
  <path d="M990 461.200v6" stroke="#111" stroke-width="1.300"/>
  <path d="M1002 461v6.400l6-3.200z" fill="#1010c0"/>
  <rect x="307.500" y="471" width="402" height="4" fill="#fafafa" stroke="#d8dce4" stroke-width="0.800"/>
  <path d="M316 473H702" stroke="#9098a8" stroke-width="1" stroke-dasharray="1 1.500"/>
  <path d="M310.800 471.800h4l-2 2.500zM703.500 471.800h4l-2 2.500z" fill="#2850a0"/>
</svg>

<style>
.ch{will-change:transform;position:absolute;top:479px;height:12.500px;box-sizing:border-box;border:1px solid #6c88a4;border-radius:2px;background:linear-gradient(#cfcfcf,#b0b0b0);text-align:center;font-size:8.500px;line-height:10.500px;color:#8c8484;}
.cb{position:absolute;box-sizing:border-box;border:1px solid #7a90a8;border-radius:2.500px;background:linear-gradient(#f8f8f8,#e4e6ea);}
.gt{will-change:transform;position:absolute;white-space:nowrap;line-height:1;font-size:9px;font-weight:bold;color:#14146c;background:#f0f0f0;padding:0 1px;letter-spacing:-0.100px;}
</style>
<div class="grp" style="left:211.500px;top:476px;width:163px;height:59px;border-color:#d4d4d4;border-right-color:#ececec;background:#f2f2f2;"></div>
<div class="grp" style="left:376.500px;top:482.500px;width:61px;height:52.500px;"></div>
<div class="grp" style="left:441px;top:482.500px;width:78px;height:52.500px;"></div>
<div class="grp" style="left:522.500px;top:482.500px;width:93.500px;height:52.500px;"></div>
<div class="grp" style="left:619.500px;top:482.500px;width:130px;height:52.500px;"></div>
<div class="grp" style="left:754px;top:482.500px;width:49.500px;height:52.500px;"></div>
<div class="gt" style="left:445px;top:479px;">Частота</div>
<div class="gt" style="left:527px;top:479px;color:#8a8a8a;">Синхронизация</div>
<div class="gt" style="left:624px;top:479px;">Управление</div>
<div class="gt" style="left:758px;top:479px;">Таймеры</div>

<div class="ch" style="left:216.500px;width:18.500px;">1</div>
<div class="ch" style="left:236px;width:35px;background:linear-gradient(#f01818,#ff0c0c 50%,#e01010);border-color:#243c64;color:#1a0000;font-weight:bold;">2</div>
<div class="ch" style="left:273px;width:18.500px;">3</div>
<div class="ch" style="left:293px;width:18.500px;">4</div>
<div class="ch" style="left:313px;width:18.500px;">5</div>
<div class="ch" style="left:333px;width:18.500px;">6</div>
<div class="ch" style="left:353px;width:18.500px;">D</div>

<div class="a" style="left:217px;top:497.500px;width:132px;height:15px;background:#fff;border:1px solid #d45858;box-sizing:border-box;"></div>
<div class="t" id="datchik" style="left:220px;top:500.500px;font-size:8.500px;letter-spacing:-0.100px;color:#111;">Датчик Полож Коленчатого Ва</div>
<div class="a" style="left:336px;top:499px;width:11.500px;height:12px;background:#f4f4f4;border-right:1px solid #a0a0a0;border-bottom:1.500px solid #909090;box-sizing:border-box;"></div>
<div class="a" style="left:218.500px;top:514.500px;width:1px;height:17px;background:#c8c8c8;"></div>
<div class="a" style="left:274.500px;top:515px;width:1px;height:16px;background:#c0c0c0;"></div>
<div class="a" style="left:276px;top:515px;width:16px;height:16px;background:#fafafa;"></div>


<div class="cb" style="left:622.500px;top:490px;width:25px;height:20.500px;"></div>
<div class="cb" style="left:650px;top:490px;width:34px;height:20.500px;"></div>
<div class="cb" style="left:622.500px;top:512px;width:61.500px;height:20.500px;"></div>
<div class="cb" style="left:686.500px;top:490px;width:33.500px;height:20.500px;border-color:#d06060;"></div>
<div class="cb" style="left:722.500px;top:490px;width:23.500px;height:20.500px;border-color:#d06060;"></div>
<div class="cb" style="left:686.500px;top:512px;width:33.500px;height:20.500px;border-color:#80a0c0;background:linear-gradient(#f4f8fc,#e0e8f0);"></div>
<div class="cb" style="left:722.500px;top:512px;width:23.500px;height:20.500px;border-color:#5070a0;"></div>
<div class="cb" style="left:760px;top:490px;width:35.500px;height:20.500px;border-color:#b0b0b0;"></div>
<div class="cb" style="left:760px;top:512px;width:35.500px;height:20.500px;border-color:#b0b0b0;"></div>
<div class="t" style="left:651px;top:517.500px;font-size:9.500px;font-weight:bold;color:#111;letter-spacing:-0.200px;">Пуск</div>
<div class="t" style="left:691px;top:517.500px;font-size:9.500px;font-weight:bold;color:#189030;letter-spacing:0px;">45.04</div>
<div class="a" style="left:529.500px;top:513px;width:34px;height:16px;background:#f6f6f6;border:1px solid #c0c0c0;box-sizing:border-box;"></div>
<svg style="left:0;top:470px;" width="1024" height="70" viewBox="0 470 1024 70">
  <defs>
    <radialGradient id="knob" cx="0.400" cy="0.380" r="0.700"><stop offset="0" stop-color="#ffffff"/><stop offset="0.720" stop-color="#f4f4f4"/><stop offset="0.900" stop-color="#b0b0b0"/><stop offset="1" stop-color="#303030"/></radialGradient>
    <linearGradient id="krim" x1="0" y1="0" x2="1" y2="1"><stop offset="0" stop-color="#d8d8d8"/><stop offset="0.500" stop-color="#707070"/><stop offset="1" stop-color="#0c0c0c"/></linearGradient>
  </defs>
  <!-- ... dots in field button -->
  <path d="M339 506h1.200M341.200 506h1.200M343.400 506h1.200" stroke="#333" stroke-width="1.200"/>
  <!-- icon after field -->
  <rect x="354.500" y="499.500" width="9" height="7" fill="#f0f0f4" stroke="#404048" stroke-width="1"/>
  <path d="M355 500.500h8" stroke="#9090a0" stroke-width="1"/>
  <path d="M354 509.500q1.500 2.500 4.500 1" fill="none" stroke="#1830c0" stroke-width="1.200"/>
  <path d="M365.500 509.500q-1.500 2.500-4.500 1" fill="none" stroke="#d02020" stroke-width="1.200"/>
  <path d="M352.500 508l1.500 3 2-2.500z" fill="#1830c0"/><path d="M367 508l-1.500 3-2-2.500z" fill="#d02020"/>
  <!-- eye/helmet -->
  <path d="M223.500 524.500q0-4 5-4t5 3.500q0 2.500-2 3.500h-6q-2-1-2-3z" fill="#181818"/>
  <path d="M225.500 524.500h5" stroke="#909090" stroke-width="0.900"/>
  <!-- waves -->
  <path d="M239.500 519.500l1.800-2 2 2.500 2-2.500 2 2.500 2-2.500 2 2" fill="none" stroke="#a010a0" stroke-width="1.100"/>
  <path d="M239.500 528l1.800-2 2 2.500 2-2.500 2 2.500 2-2.500 2 2" fill="none" stroke="#a010a0" stroke-width="1.100"/>
  <path d="M243.800 522h4l-2 2.500z" fill="#111"/>
  <path d="M241 523.300h9.500" stroke="#808080" stroke-width="0.500" stroke-dasharray="1 1"/>
  <!-- blue arrow -->
  <path d="M264.500 516.500l5 5h-3v4h3l-5 5-5-5h3v-4h-3z" fill="#1414d8"/>
  <path d="M264.500 520v7" stroke="#e01060" stroke-width="1.400"/>
  <!-- lines -->
  <path d="M278 519.500h12M278 527.500h12" stroke="#111" stroke-width="1.300"/>
  <path d="M278 523.500h12" stroke="#333" stroke-width="0.800" stroke-dasharray="1 0.800"/>
  <!-- fx -->
  <text x="297.500" y="527.500" font-family="Liberation Serif, serif" font-style="italic" font-weight="bold" font-size="10" fill="#111">f</text>
  <text x="302" y="527.500" font-family="Liberation Serif, serif" font-style="italic" font-weight="bold" font-size="6" fill="#111">x</text>
  <!-- tools -->
  <path d="M315 517.500l9.500 10.500" stroke="#404850" stroke-width="1.600" stroke-linecap="round"/>
  <path d="M324.500 517.500l-7 8" stroke="#404850" stroke-width="1.300"/>
  <circle cx="316.500" cy="526.500" r="2.300" fill="#5080c0" stroke="#304870" stroke-width="0.600"/>
  <path d="M322.500 517l3 1-1.500 2z" fill="#404850"/>

  <!-- knob 1 -->
  <g stroke="#a4a4a4" stroke-width="2.600" fill="none">
    <circle cx="400.700" cy="516" r="14.300" stroke-dasharray="1 1.700" transform="rotate(130 400.700 516)"/>
  </g>
  <path d="M386 527.500h30l4 8h-38z" fill="#f0f0f0"/>
  <circle cx="400.900" cy="516.400" r="13" fill="url(#krim)"/>
  <circle cx="400" cy="515.400" r="11.300" fill="#fcfcfc"/>
  <g stroke="#222" stroke-width="1">
    <path d="M389.500 526.500l-3 2.200M387.500 511l-3-1.200M393 503.500l-1.800-2.800M405.500 502.500l1.200-3M414 509.500l3-1.500M412 526.500l2.800 2.300"/>
  </g>
  <path d="M397 501.500l3.500 3-4 1.500z" fill="#1818b0"/>
  <!-- knob 2 -->
  <g stroke="#b8b8b8" stroke-width="2.600" fill="none">
    <circle cx="478.300" cy="516" r="14.300" stroke-dasharray="1 1.700" transform="rotate(130 478.300 516)"/>
  </g>
  <path d="M464 527.500h30l4 8h-38z" fill="#f0f0f0"/>
  <circle cx="478.500" cy="516.400" r="13" fill="url(#krim)"/>
  <circle cx="477.600" cy="515.400" r="11.300" fill="#fcfcfc"/>
  <g stroke="#222" stroke-width="1">
    <path d="M467 526.500l-3 2.200M469 503.500l-2.500-2.500M480.500 501.500v-3.500M487.500 504l2.500-2.500M491.500 510l3-1.200M490 526.500l2.800 2.300"/>
  </g>
  <path d="M483.500 505l4.500 1-3.500 3z" fill="#1818b0"/>

  <!-- sync icons (disabled) -->
  <g fill="none" stroke="#b4b4b4" stroke-width="1.100">
    <path d="M532 504.500c6 0 5-10 11-10"/><path d="M534 497.500v5M534 499.500l3.500 0"/>
    <path d="M552 504.500h6v-10h7.500"/><path d="M555.500 502v-5l-2 2m2-2l2 2"/>
    <path d="M574 494.500h6v10h7.500"/><path d="M583.500 497v5l-2-2m2 2l2-2"/>
    <path d="M595 495l5 8M595 503l4-3"/><path d="M603 495q-3 3-1 6t4 2" stroke-width="1.800"/>
    <path d="M575 518.500h11M575 522.500h9M579 526.500h8"/><path d="M584 516l3 2.500-3 2.500M582 524l-3 2.500 3 2.500" stroke-width="0.900"/>
    <path d="M595.500 522.500h4.500M604 522.500h4.500"/>
  </g>
  <path d="M599.500 520l3 2.500-3 2.500zM604.500 520l-3 2.500 3 2.500z" fill="#b0b0b0"/>
  <path d="M553.500 521h5l-2.500 3z" fill="#909090"/>

  <!-- pause -->
  <rect x="630.500" y="495" width="3.200" height="10.500" fill="#101080"/><rect x="636" y="495" width="3.200" height="10.500" fill="#101080"/>
  <!-- sine -->
  <path d="M656 500.500c3-9 7-9 10.500 0s7.500 9 10.500 0" fill="none" stroke="#d84040" stroke-width="1.100"/>
  <!-- play -->
  <path d="M630.500 516.500v12l7-6z" fill="#18d018"/>
  <!-- waves button -->
  <path d="M691.500 498l2-2 2 3 2-3 2 3 2-3 2 3 2-3 2 3 2-3 1.500 2" fill="none" stroke="#d03030" stroke-width="0.900"/>
  <path d="M691.500 505.500h2l1-2 2 3.500 2-3.500 1 2h2l1-2 2 3.500 2-3.500 1 2h1.500" fill="none" stroke="#203090" stroke-width="0.900"/>
  <path d="M716 496l-2.500 1.800 2.500 1.800zM716 503.500l-2.500 1.800 2.500 1.800z" fill="#203090"/>
  <!-- auto icon -->
  <text x="734.200" y="497.500" font-size="5" font-weight="bold" text-anchor="middle" fill="#202040" font-family="Liberation Sans, sans-serif">AUTO</text>
  <circle cx="734.200" cy="503" r="3.600" fill="#fff" stroke="#202040" stroke-width="1"/>
  <path d="M732.500 502l1.700 2 1.700-2" fill="none" stroke="#202040" stroke-width="0.800"/>
  <path d="M729 499l1.500 1.200M739.500 499l-1.500 1.200M728.500 504h1.500M738.500 504h1.500" stroke="#3050a0" stroke-width="0.800"/>
  <!-- auto2 icon -->
  <text x="734.200" y="520" font-size="5" font-weight="bold" text-anchor="middle" fill="#202040" font-family="Liberation Sans, sans-serif">AUTO</text>
  <path d="M727 525.500h4" stroke="#2030a0" stroke-width="1.100"/><path d="M730 523.500l2.500 2-2.500 2z" fill="#2030a0"/>
  <path d="M733.500 529.500v-5q0-2 2-2t2 2v5" fill="none" stroke="#c05030" stroke-width="0.900"/>
  <path d="M739.500 522.500v7l4.500-3.500z" fill="#18a030"/>
  <!-- timers -->
  <circle cx="773" cy="500.500" r="7" fill="#fafafa" stroke="#303030" stroke-width="1"/>
  <path d="M773 500.500v-5M773 500.500l3.500-2.500" stroke="#309040" stroke-width="1" fill="none"/>
  <path d="M763.500 496.500h4v-2l4 3.500-4 3.500v-2h-4z" fill="#30a060" stroke="#106030" stroke-width="0.600"/>
  <path d="M786 499.500h5l-2.500 3z" fill="#111"/>
  <circle cx="773" cy="521.500" r="7" fill="#fafafa" stroke="#303030" stroke-width="1"/>
  <path d="M773 521.500v-5M773 521.500l3.500-2.500" stroke="#309040" stroke-width="1" fill="none"/>
  <path d="M773.500 525h4v-2l4 3.500-4 3.500v-2h-4z" fill="#d030b0" stroke="#701060" stroke-width="0.600"/>
  <path d="M786 521.500h5l-2.500 3z" fill="#111"/>
</svg>
<div class="t" style="left:390.700px;width:20px;text-align:center;top:512px;font-size:8.400px;letter-spacing:-0.400px;color:#111;">30В</div>
<div class="t" style="left:465.300px;width:26px;text-align:center;top:512px;font-size:8.400px;letter-spacing:-0.400px;color:#111;">333K</div>

<div class="kl" style="left:382.4px;top:492.9px;">10В</div>
<div class="kl" style="left:407.0px;top:490.6px;">100В</div>
<div class="kl" style="left:375.0px;top:505.7px;">1В</div>
<div class="kl" style="left:420.0px;top:503.4px;">200В</div>
<div class="kl" style="left:370.8px;top:526.7px;">0.1В</div>
<div class="kl" style="left:416.5px;top:526.7px;">500В</div>
<div class="kl" style="left:450.5px;top:496.8px;">100K</div>
<div class="kl" style="left:476.0px;top:489.3px;">250K</div>
<div class="kl" style="left:491.6px;top:496.8px;">333K</div>
<div class="kl" style="left:497.5px;top:505.6px;">500K</div>
<div class="kl" style="left:454.7px;top:526.7px;">1K</div>
<div class="kl" style="left:494.2px;top:526.7px;">1M</div>
<div class="t" style="left:533px;top:516px;font-size:9.500px;color:#555;">2</div>

<div class="a" style="left:3px;top:60px;width:1px;height:477px;background:#9a9a9a;"></div>
<div class="a" style="left:1014px;top:60px;width:1px;height:477px;background:#a0a0a0;"></div>
<div class="a" style="left:3px;top:536px;width:1012px;height:1px;background:#8c8c8c;"></div>
<div class="a" style="left:3px;top:537px;width:1012px;height:14px;background:#f3f3f3;"></div>
<div class="a" style="left:4px;top:538px;width:1010px;height:1px;background:#dcdcdc;"></div>
<div class="a" style="left:146px;top:539px;width:1px;height:12px;background:#c8c8c8;"></div>
<div class="a" style="left:979px;top:539px;width:1px;height:12px;background:#c8c8c8;"></div>
<div class="t" id="usb" style="left:6px;top:540.500px;color:#222;white-space:pre;font-size:8.400px;letter-spacing:-0.300px;will-change:transform;">USB Осциллограф  2.01.5901</div>
<div class="t u" style="left:981px;top:540.500px;color:#222;">2.4</div>

</body>
</html>
